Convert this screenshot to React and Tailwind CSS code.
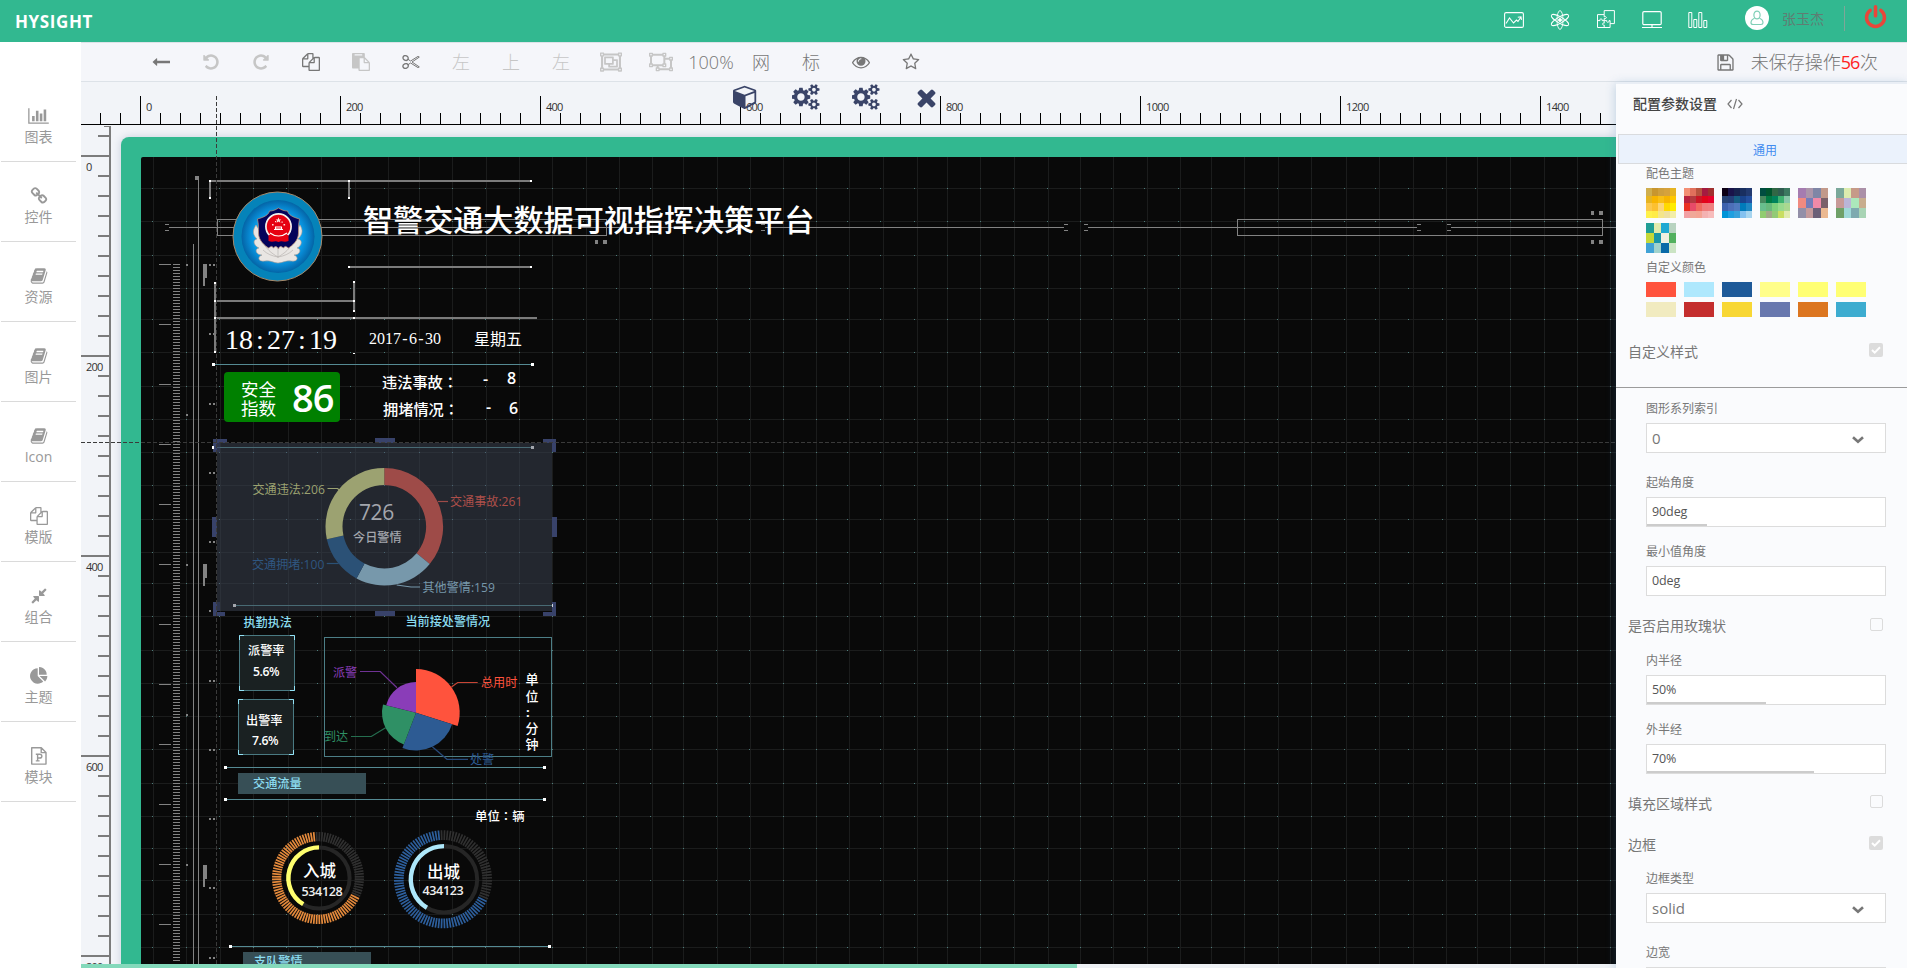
import React from "react";
import { FaRegObjectGroup, FaRegObjectUngroup } from "react-icons/fa";

/* ---------- icons ---------- */

const GLYPHS = {
  times:
    "M1490 1322q0 40-28 68l-136 136q-28 28-68 28t-68-28l-294-294-294 294q-28 28-68 28t-68-28l-136-136q-28-28-28-68t28-68l294-294-294-294q-28-28-28-68t28-68l136-136q28-28 68-28t68 28l294 294 294-294q28-28 68-28t68 28l136 136q28 28 28 68t-28 68l-294 294 294 294q28 28 28 68z",
  eye: "M1664 960q-152-236-381-353 61 104 61 225 0 185-131.5 316.5t-316.5 131.5-316.5-131.5-131.5-316.5q0-121 61-225-229 117-381 353 133 205 333.5 326.5t434.5 121.5 434.5-121.5 333.5-326.5zm-720-384q0-20-14-34t-34-14q-125 0-214.5 89.5t-89.5 214.5q0 20 14 34t34 14 34-14 14-34q0-86 61-147t147-61q20 0 34-14t14-34zm848 384q0 34-20 69-140 230-376.5 368.5t-499.5 138.5-499.5-139-376.5-368q-20-35-20-69t20-69q140-229 376.5-368t499.5-139 499.5 139 376.5 368q20 35 20 69z",
  copy: "M1696 384q40 0 68 28t28 68v1216q0 40-28 68t-68 28h-960q-40 0-68-28t-28-68v-288h-544q-40 0-68-28t-28-68v-672q0-40 20-88t48-76l408-408q28-28 76-48t88-20h416q40 0 68 28t28 68v328q68-40 128-40h416zm-544 213l-299 299h299v-299zm-640-384l-299 299h299v-299zm196 647l316-316v-416h-384v416q0 40-28 68t-68 28h-416v640h512v-256q0-40 20-88t48-76zm956 804v-1152h-384v416q0 40-28 68t-68 28h-416v640h896z",
  paste:
    "M768 1664h896v-640h-416q-40 0-68-28t-28-68v-416h-384v1152zm256-1440v-64q0-13-9.5-22.5t-22.5-9.5h-704q-13 0-22.5 9.5t-9.5 22.5v64q0 13 9.5 22.5t22.5 9.5h704q13 0 22.5-9.5t9.5-22.5zm256 672h299l-299-299v299zm512 128v672q0 40-28 68t-68 28h-960q-40 0-68-28t-28-68v-160h-544q-40 0-68-28t-28-68v-1344q0-40 28-68t68-28h1088q40 0 68 28t28 68v328q21 13 36 28l408 408q28 28 48 76t20 88z",
  undo: "M1664 896q0 156-61 298t-164 245-245 164-298 61q-172 0-327-72.5t-264-204.5q-7-10-6.5-22.5t8.5-20.5l137-138q10-9 25-9 16 2 23 12 73 95 179 147t225 52q104 0 198.5-40.5t163.5-109.5 109.5-163.5 40.5-198.5-40.5-198.5-109.5-163.5-163.5-109.5-198.5-40.5q-98 0-188 35.5t-160 101.5l137 138q31 30 14 69-17 40-59 40h-448q-26 0-45-19t-19-45v-448q0-42 40-59 39-17 69 14l130 129q107-101 244.5-156.5t284.5-55.5q156 0 298 61t245 164 164 245 61 298z",
  star: "M1201 1004l306-297-422-62-189-382-189 382-422 62 306 297-73 421 378-199 377 199zm527-357q0 22-26 48l-363 354 86 500q1 7 1 20 0 50-41 50-19 0-40-12l-449-236-449 236q-22 12-40 12-21 0-31.5-14.5t-10.5-35.5q0-6 2-20l86-500-364-354q-25-27-25-48 0-37 56-46l502-73 225-455q19-41 49-41t49 41l225 455 502 73q56 9 56 46z",
  bars: "M640 896v512h-256v-512h256zm384-512v1024h-256v-1024h256zm1024 1152v128h-2048v-1536h128v1408h1920zm-640-896v768h-256v-768h256zm384-384v1152h-256v-1152h256z",
  compress:
    "M896 960v448q0 26-19 45t-45 19-45-19l-144-144-332 332q-10 10-23 10t-23-10l-114-114q-10-10-10-23t10-23l332-332-144-144q-19-19-19-45t19-45 45-19h448q26 0 45 19t19 45zm755-672q0 13-10 23l-332 332 144 144q19 19 19 45t-19 45-45 19h-448q-26 0-45-19t-19-45v-448q0-26 19-45t45-19 45 19l144 144 332-332q10-10 23-10t23 10l114 114q10 10 10 23z",
  pie: "M768 890l546 546q-106 108-247.5 168t-298.5 60q-209 0-385.5-103t-279.5-279.5-103-385.5 103-385.5 279.5-279.5 385.5-103v762zm187 6h773q0 157-60 298.5t-168 247.5zm709-128h-768v-768q209 0 385.5 103t279.5 279.5 103 385.5z",
  link: "M1520 1216q0-40-28-68l-208-208q-28-28-68-28-42 0-72 32 3 3 19 18.5t21.5 21.5 15 19 13 25.5 3.5 27.5q0 40-28 68t-68 28q-15 0-27.5-3.5t-25.5-13-19-15-21.5-21.5-18.5-19q-33 31-33 73 0 40 28 68l206 207q27 27 68 27 40 0 68-26l147-146q28-28 28-67zm-703-705q0-40-28-68l-206-207q-28-28-68-28-39 0-68 27l-147 146q-28 28-28 67 0 40 28 68l208 208q27 27 68 27 42 0 72-31-3-3-19-18.5t-21.5-21.5-15-19-13-25.5-3.5-27.5q0-40 28-68t68-28q15 0 27.5 3.5t25.5 13 19 15 21.5 21.5 18.5 19q33-31 33-73zm895 705q0 120-85 203l-147 146q-83 83-203 83-121 0-204-85l-206-207q-83-83-83-203 0-123 88-209l-88-88q-86 88-208 88-120 0-204-84l-208-208q-84-84-84-204t85-203l147-146q83-83 203-83 121 0 204 85l206 207q83 83 83 203 0 123-88 209l88 88q86-88 208-88 120 0 204 84l208 208q84 84 84 204z",
  book: "M1703 478q40 57 18 129l-275 906q-19 64-76.5 107.5t-122.5 43.5h-923q-77 0-148.5-53.5t-99.5-131.5q-24-67-2-127 0-4 3-27t4-37q1-8-3-21.5t-3-19.5q2-11 8-21t16.5-23.5 16.5-23.5q23-38 45-91.5t30-91.5q3-10 .5-30t-.5-28q3-11 17-28t17-23q21-36 42-92t25-90q1-9-2.5-32t.5-28q4-13 22-30.5t22-22.5q19-26 42.5-84.5t27.5-96.5q1-8-3-25.5t-2-26.5q2-8 9-18t18-23 17-21q8-12 16.5-30.5t15-35 16-36 19.5-32 26.5-23.5 36-11.5 47.5 5.5l-1 3q38-9 51-9h761q74 0 114 56t18 130l-274 906q-36 119-71.5 153.5t-128.5 34.5h-869q-27 0-38 15-11 16-1 43 24 70 144 70h923q29 0 56-15.5t35-41.5l300-987q7-22 5-57 38 15 59 43zm-1064 2q-4 13 2 22.5t20 9.5h608q13 0 25.5-9.5t16.5-22.5l21-64q4-13-2-22.5t-20-9.5h-608q-13 0-25.5 9.5t-16.5 22.5zm-83 256q-4 13 2 22.5t20 9.5h608q13 0 25.5-9.5t16.5-22.5l21-64q4-13-2-22.5t-20-9.5h-608q-13 0-25.5 9.5t-16.5 22.5z",
  arrow:
    "M1792 800v192q0 14-9 23t-23 9h-1248v224q0 21-19 29t-35-5l-384-350q-10-10-10-23 0-14 10-24l384-354q16-14 35-6 19 9 19 29v224h1248q14 0 23 9t9 23z",
  cube: "M896 1629l640-349v-636l-640 233v752zm-64-865l698-254-698-254-698 254zm832-252v768q0 35-18 65t-49 47l-704 384q-28 16-61 16t-61-16l-704-384q-31-17-49-47t-18-65v-768q0-40 23-73t61-47l704-256q22-8 44-8t44 8l704 256q38 14 61 47t23 73z",
  save: "M512 1536h768v-384h-768v384zm896 0h128v-896q0-14-10-38.5t-20-34.5l-281-281q-10-10-34-20t-39-10v416q0 40-28 68t-68 28h-576q-40 0-68-28t-28-68v-416h-128v1280h128v-416q0-40 28-68t68-28h832q40 0 68 28t28 68v416zm-384-928v-320q0-13-9.5-22.5t-22.5-9.5h-192q-13 0-22.5 9.5t-9.5 22.5v320q0 13 9.5 22.5t22.5 9.5h192q13 0 22.5-9.5t9.5-22.5zm640 32v928q0 40-28 68t-68 28h-1344q-40 0-68-28t-28-68v-1344q0-40 28-68t68-28h928q40 0 88 20t76 48l280 280q28 28 48 76t20 88z",
  cogs: "M832 896q0-106-75-181t-181-75-181 75-75 181 75 181 181 75 181-75 75-181zm768 512q0-52-38-90t-90-38-90 38-38 90q0 53 37.5 90.5t90.5 37.5 90.5-37.5 37.5-90.5zm0-1024q0-52-38-90t-90-38-90 38-38 90q0 53 37.5 90.5t90.5 37.5 90.5-37.5 37.5-90.5zm-384 421v185q0 10-7 19.5t-16 10.5l-155 24q-11 35-32 76 34 48 90 115 7 11 7 20 0 12-7 19-23 30-82.5 89.5t-78.5 59.5q-11 0-21-7l-115-90q-37 19-77 31-11 108-23 155-7 24-30 24h-186q-11 0-20-7.5t-10-17.5l-23-153q-34-10-75-31l-118 89q-7 7-20 7-11 0-21-8-144-133-144-160 0-9 7-19 10-14 41-53t47-61q-23-44-35-82l-152-24q-10-1-17-9.5t-7-19.5v-185q0-10 7-19.5t16-10.5l155-24q11-35 32-76-34-48-90-115-7-11-7-20 0-12 7-20 22-30 82-89t79-59q11 0 21 7l115 90q34-18 77-32 11-108 23-154 7-24 30-24h186q11 0 20 7.5t10 17.5l23 153q34 10 75 31l118-89q8-7 20-7 11 0 21 8 144 133 144 160 0 8-7 19-12 16-42 54t-45 60q23 48 34 82l152 23q10 2 17 10.5t7 19.5zm640 533v140q0 16-149 31-12 27-30 52 51 113 51 138 0 4-4 7-122 71-124 71-8 0-46-47t-52-68q-20 2-30 2t-30-2q-14 21-52 68t-46 47q-2 0-124-71-4-3-4-7 0-25 51-138-18-25-30-52-149-15-149-31v-140q0-16 149-31 13-29 30-52-51-113-51-138 0-4 4-7 4-2 35-20t59-34 30-16q8 0 46 46.5t52 67.5q20-2 30-2t30 2q51-71 92-112l6-2q4 0 124 70 4 3 4 7 0 25-51 138 17 23 30 52 149 15 149 31zm0-1024v140q0 16-149 31-12 27-30 52 51 113 51 138 0 4-4 7-122 71-124 71-8 0-46-47t-52-68q-20 2-30 2t-30-2q-14 21-52 68t-46 47q-2 0-124-71-4-3-4-7 0-25 51-138-18-25-30-52-149-15-149-31v-140q0-16 149-31 13-29 30-52-51-113-51-138 0-4 4-7 4-2 35-20t59-34 30-16q8 0 46 46.5t52 67.5q20-2 30-2t30 2q51-71 92-112l6-2q4 0 124 70 4 3 4 7 0 25-51 138 17 23 30 52 149 15 149 31z",
  power:
    "M1664 896q0 156-61 298t-164 245-245 164-298 61-298-61-245-164-164-245-61-298q0-182 80.5-343t226.5-270q43-32 95.5-25t83.5 50q32 42 24.5 94.5t-49.5 84.5q-98 74-151.5 181t-53.5 228q0 104 40.5 198.5t109.5 163.5 163.5 109.5 198.5 40.5 198.5-40.5 163.5-109.5 109.5-163.5 40.5-198.5q0-121-53.5-228t-151.5-181q-42-32-49.5-84.5t24.5-94.5q31-43 84-50t95 25q146 109 226.5 270t80.5 343zm-640-768v640q0 52-38 90t-90 38-90-38-38-90v-640q0-52 38-90t90-38 90 38 38 90z",
};

const VIEW = { bars: "0 0 2048 1792", cogs: "0 0 1920 1792" };

function Glyph({ name, className = "size-[18px]" }) {
  return (
    <svg viewBox={VIEW[name] || "0 0 1792 1792"} className={className} fill="currentColor">
      <path d={GLYPHS[name]} />
    </svg>
  );
}

const Scissors = () => (
  <svg viewBox="0 0 18 18" className="size-[18px]" fill="none" stroke="currentColor" strokeWidth="1.3">
    <ellipse cx="3.6" cy="5" rx="2.7" ry="2.3" transform="rotate(25 3.6 5)" />
    <ellipse cx="3.6" cy="13" rx="2.7" ry="2.3" transform="rotate(-25 3.6 13)" />
    <path d="M6 6.3 8.6 8l7.4-4.6 1.3.7L10 9l7.3 4.9-1.3.7L8.6 10 6 11.7" strokeWidth="1" />
  </svg>
);

const PptFile = () => (
  <svg viewBox="0 0 18 18" className="size-[18px]" fill="none" stroke="currentColor" strokeWidth="1.4">
    <path d="M1.7.8h9.6L16 5.5v11.6H1.7z M11.2.9v4.7H16" strokeLinejoin="round" />
    <path d="M5.8 13.9h3.8M5.8 7.2h1.8M7.6 7.2v6.5M7.4 7.3h2.2c3 0 3 3.7 0 3.7H7.8" strokeWidth="1.4" />
  </svg>
);

/* ---------- header ---------- */

const headerIcon = "h-[20px] w-[20px]";
const HEADER_ICONS = [
  <svg viewBox="0 0 20 20" className={headerIcon} fill="none" stroke="currentColor" strokeWidth="1.1">
    <rect x=".6" y="2.6" width="18.8" height="14.8" rx="1.5" />
    <path d="M2 13.5 5.5 8l4 5 3-3 1.5 1.5 3-4.5M13.8 7.2l3.2-.4.5 3" />
  </svg>,
  <svg viewBox="0 0 20 20" className={headerIcon} fill="none" stroke="currentColor" strokeWidth=".9">
    <ellipse cx="10" cy="10" rx="3" ry="9.4" />
    <ellipse cx="10" cy="10" rx="3" ry="9.8" transform="rotate(60 10 10)" />
    <ellipse cx="10" cy="10" rx="3" ry="9.8" transform="rotate(120 10 10)" />
    <circle cx="10" cy="10" r="1.5" fill="currentColor" />
  </svg>,
  <svg viewBox="0 0 20 20" className={headerIcon} fill="none" stroke="currentColor" strokeWidth="1">
    <path d="M8.2 4.6V.6h10.2v13h-4.3M8.2 4.6H1.5v12.9h12.6v-3.9M8.2 4.6v2.2c2.5-1.2 3.2 2.4 0 1.8V10M1.5 10.6H4c-1-2.2 3-2.2 2.2 0h4.6c-1 2.2 3 2.2 2.2 0h1.100M8.2 11v2.2c-2-.8-2.6 2.2 0 1.8v2.5M14.1 13.6v-3" />
  </svg>,
  <svg viewBox="0 0 20 20" className={headerIcon} fill="none" stroke="currentColor" strokeWidth="1.2">
    <rect x=".8" y="1.6" width="18.4" height="13" rx="1.2" />
    <path d="M10 14.6v2.6M0 17.5h20" />
  </svg>,
  <svg viewBox="0 0 20 20" className={headerIcon} fill="none" stroke="currentColor" strokeWidth="1">
    <path d="M.8 2.500h3v15h-3zM5.800 9.500h3v8h-3zM10.800 2.500h3v15h-3zM15.800 10.500h3v7h-3z" />
  </svg>,
];

function Header() {
  return (
    <header className="flex h-[42px] shrink-0 items-start bg-[#32b890] text-white">
      <div className="mt-[13px] ml-[15px] font-['Open_Sans'] text-[17px] leading-[18px] font-bold tracking-[0.6px]">HYSIGHT</div>
      <nav className="mt-[10px] ml-auto flex">
        {HEADER_ICONS.map((icon, i) => (
          <span key={i} className="flex w-[46px] justify-center">
            {icon}
          </span>
        ))}
      </nav>
      <span className="mt-[6px] ml-[24px] flex size-[24px] items-center justify-center rounded-full bg-white text-[#7fcfb6]">
        <svg viewBox="0 0 14 16" className="h-[16px] w-[14px]" fill="none" stroke="currentColor" strokeWidth="1.2">
          <ellipse cx="7" cy="5" rx="3.1" ry="3.9" />
          <path d="M4.500 8.300C2 9.300 1 10.700 1 12.800 1 14.100 1.800 14.500 3 14.500H11C12.200 14.500 13 14.100 13 12.800 13 10.700 12 9.300 9.500 8.300" />
        </svg>
      </span>
      <span className="mt-[10px] ml-[13px] text-[14px] leading-[18px] text-[#5f7d73]">张玉杰</span>
      <span className="mt-[6px] ml-[20px] h-[25px] w-px bg-[#7fa698]" />
      <Glyph name="power" className="mt-[5px] mr-[19px] ml-[18px] size-[25px] text-[#e8463a]" />
    </header>
  );
}

/* ---------- left menu ---------- */

const MENU = [
  ["图表", <Glyph name="bars" className="h-[18px] w-[21px]" />],
  ["控件", <Glyph name="link" />],
  ["资源", <Glyph name="book" />],
  ["图片", <Glyph name="book" />],
  ["Icon", <Glyph name="book" />],
  ["模版", <Glyph name="copy" />],
  ["组合", <Glyph name="compress" />],
  ["主题", <Glyph name="pie" />],
  ["模块", <PptFile />],
];

function Sidebar() {
  return (
    <aside className="w-[81px] shrink-0 bg-white pt-[40px] pl-px text-[#999]">
      {MENU.map(([label, icon]) => (
        <div key={label} className="flex h-[80px] w-[75px] flex-col items-center border-b border-[#dadada] pt-[25px]">
          {icon}
          <span className="mt-[3px] text-[14px] leading-[18px]">{label}</span>
        </div>
      ))}
    </aside>
  );
}

/* ---------- toolbar ---------- */

const TOOLS = [
  [<Glyph name="arrow" />, true],
  [<Glyph name="undo" />, false],
  [<Glyph name="undo" className="size-[18px] -scale-x-100" />, false],
  [<Glyph name="copy" />, true],
  [<Glyph name="paste" />, false],
  [<Scissors />, true],
  ["左", false],
  ["上", false],
  ["左", false],
  [<FaRegObjectGroup className="size-[22px]" />, false],
  [<FaRegObjectUngroup className="size-[24px]" />, false],
  ["100%", true],
  ["网", true],
  ["标", true],
  [<Glyph name="eye" />, true],
  [<Glyph name="star" />, true],
];

function Toolbar() {
  return (
    <div className="flex h-[40px] shrink-0 items-center border-y border-[#dde2e8] bg-[#f5f6fa] pl-[55px] text-[18px] leading-none font-light">
      {TOOLS.map(([item, on], i) => (
        <span key={i} className={`flex w-[50px] items-center justify-center ${on ? "text-[#777]" : "text-[#c6c6c6]"}`}>
          {item}
        </span>
      ))}
      <Glyph name="save" className="ml-auto size-[19px] text-[#777]" />
      <span className="mr-[29px] ml-[16px] text-[#777]">
        未保存操作<span className="mr-[1px] font-['Open_Sans'] font-normal tracking-[-1.2px] text-[#f22]">56</span>次
      </span>
    </div>
  );
}

/* ---------- rulers ---------- */

const range = (a, b, step) => Array.from({ length: Math.floor((b - a) / step) + 1 }, (_, i) => a + i * step);

function TopRuler() {
  return (
    <svg viewBox="81 82 1535 43" className="block h-[43px] w-[1535px] shrink-0" shapeRendering="crispEdges">
      <rect x="81" y="124" width="1535" height="1" fill="#000" />
      {range(100, 1616, 20).map((x) => {
        const major = (x - 140) % 200 === 0;
        return <rect key={x} x={x} y={major ? 96 : 113} width="1" height={major ? 28 : 11} fill="#000" />;
      })}
      {range(0, 1400, 200).map((v) => (
        <text key={v} x={v + 146} y="111" fontSize="11" textLength={String(v).length * 5.8} fill="#333">
          {v}
        </text>
      ))}
    </svg>
  );
}

function SideRuler() {
  return (
    <svg viewBox="81 125 31 843" className="block h-[843px] w-[31px] shrink-0" shapeRendering="crispEdges">
      <rect x="109" y="126" width="2" height="842" fill="#7c7c7c" />
      <rect x="104" y="126" width="6" height="1" fill="#7c7c7c" />
      {range(136, 966, 20).map((y) => {
        const major = (y - 156) % 200 === 0;
        return <rect key={y} x={major ? 81 : 98} y={y - 1} width={major ? 29 : 12} height="2" fill="#7c7c7c" />;
      })}
      {range(0, 800, 200).map((v) => (
        <text key={v} x="86" y={v + 171} fontSize="11" textLength={String(v).length * 5.8} fill="#333">
          {v}
        </text>
      ))}
    </svg>
  );
}

/* ---------- canvas drawing ---------- */

const GRID_X = [153, 186, 220, 253, 288, 321, 355, 388, 419, 452, 486, 519, 552, 586, 619, 652, 683, 717, 750, 783, 816, 849, 883, 917, 947, 980, 1014, 1048, 1080, 1113, 1147, 1180, 1211, 1244, 1278, 1311, 1346, 1379, 1413, 1446, 1477, 1510, 1544, 1577, 1610];
const DOT_X = [152, 186, 219, 253, 286, 317, 350, 384, 419, 452, 485, 519, 552, 583, 616, 650, 683, 716, 749, 783, 816, 847, 880, 914, 947, 980, 1013, 1047, 1080, 1111, 1144, 1178, 1211, 1244, 1277, 1311, 1344, 1375, 1408, 1442, 1475, 1510, 1544, 1577, 1610];
const GRID_Y = [188, 221, 255, 288, 319, 352, 386, 419, 452, 485, 519, 552, 583, 616, 650, 683, 716, 749, 783, 816, 848, 880, 914, 947];

function GridLines() {
  return (
    <g shapeRendering="crispEdges">
      {GRID_X.map((x) => (
        <rect key={x} x={x} y="157" width="1" height="807" fill="#1b1c1c" />
      ))}
      {GRID_Y.map((y) => (
        <rect key={y} x="141" y={y} width="1475" height="1" fill="#1b1c1c" />
      ))}
      {GRID_Y.flatMap((y) => DOT_X.map((x) => <rect key={`${x}-${y}`} x={x} y={y} width="1" height="1" fill="#4f7d7b" />))}
    </g>
  );
}

const R = (x, y, w, h, fill) => <rect key={`${x},${y},${w},${h}`} x={x} y={y} width={w} height={h} fill={fill} />;

function Decor() {
  const g = "#828282";
  return (
    <g shapeRendering="crispEdges">
      {R(198, 178, 1, 786, g)}
      {R(195, 176, 4, 4, g)}
      {R(193, 244, 1, 720, g)}
      {range(264, 962, 3).map((y) => R(173, y, 7, 1, g))}
      {range(264, 962, 60).map((y) => R(159, y, 12, 1, g))}
      {range(264, 962, 150).map((y) => R(186, y, 2, 2, g))}
      {[264, 564, 865].flatMap((y) => [R(203, y, 4, 14, g), R(203, y, 2, 22, g)])}
      {range(0, 10, 1).flatMap((i) => {
        const y = Math.round(264 + i * 69.25);
        return [R(209, y, 2, 2, g), R(213, y, 2, 2, g)];
      })}
      {[
        [169, 736],
        [765, 1064],
        [1088, 1417],
        [1451, 1616],
      ].map(([a, b]) => R(a, 227, b - a, 1, g))}
      {[165, 736, 761, 1064, 1084, 1417, 1447].flatMap((x) => [R(x, 224, 4, 1, g), R(x, 230, 4, 1, g)])}
      <rect x="217.5" y="219.5" width="389" height="16" fill="none" stroke={g} />
      <rect x="1237.5" y="219.5" width="365" height="16" fill="none" stroke={g} />
      {[
        [595, 240],
        [1591, 240],
        [1591, 211],
      ].flatMap(([x, y]) => [R(x, y, 3, 4, g), R(x + 8, y, 4, 4, g)])}
    </g>
  );
}

function FrameLines() {
  const g = "#7b7b7b";
  const dots = [
    [209, 180],
    [348, 180],
    [530, 180],
    [209, 197],
    [348, 197],
    [348, 266],
    [530, 266],
    [214, 282],
    [353, 281],
    [214, 300],
    [353, 300],
    [353, 310],
    [214, 317],
    [353, 317],
    [214, 351],
    [353, 353],
  ];
  return (
    <g shapeRendering="crispEdges">
      {R(209, 180, 322, 2, g)}
      {R(209, 181, 2, 17, g)}
      {R(348, 181, 2, 17, g)}
      {R(348, 266, 183, 2, g)}
      {R(214, 283, 2, 69, g)}
      {R(353, 281, 2, 30, g)}
      {R(215, 300, 139, 2, g)}
      {R(215, 317, 322, 2, g)}
      {dots.map(([x, y]) => R(x, y, 2, y === 353 ? 1 : 2, "#fff"))}
    </g>
  );
}

function TealLine({ x1, x2, y }) {
  return (
    <g shapeRendering="crispEdges">
      <rect x={x1} y={y} width={x2 - x1} height="1" fill="#558a93" />
      <rect x={x1 - 1} y={y - 1} width="3" height="3" fill="#fff" />
      <rect x={x2 - 2} y={y - 1} width="3" height="3" fill="#fff" />
    </g>
  );
}

function Emblem() {
  return (
    <g>
      <defs>
        <radialGradient id="core">
          <stop offset="0" stopColor="#35c4ff" />
          <stop offset=".65" stopColor="#0aa0ee" />
          <stop offset="1" stopColor="#0464a6" />
        </radialGradient>
      </defs>
      <circle cx="277.5" cy="236.5" r="44.5" fill="#0583b9" stroke="#a58a6c" strokeWidth="1" />
      <circle cx="278" cy="236.5" r="36.5" fill="url(#core)" />
      <path
        d="M256 225c-4 6-3 10 1 14-5 1-3 7 2 9-5 1-3 7 3 7-5 2-4 7 3 6 5-1 9 2 13 2s9-3 13-2c7 1 8-4 3-6 6 0 8-6 3-7 5-2 6-8 1-9 5-5 5-9 2-14l-5 8c-10 14-24 14-34 0z"
        fill="#e9e6e3"
        stroke="#b79c8f"
        strokeWidth=".6"
      />
      <path d="M262 240c4 9 9 13 16 17M294 240c-4 9-9 13-16 17M278 248v10M263 250c4 4 9 6 15 7M293 250c-4 4-9 6-15 7" stroke="#b9b4b2" strokeWidth=".7" fill="none" />
      <path
        d="M278.5 208c3 2 6 3 9 3 1 4 5 6 12 8-1 5-1 9-1 14 0 8-7 13-10 15-2-1-3-3-5 0-3-2-4-2-5 1-2-3-3-3-5-1-2-3-3-1-5 0-3-2-10-7-10-15 0-5 0-9-1-14 7-2 11-4 12-8 3 0 6-1 9-3z"
        fill="#03025a"
        stroke="#b98f78"
        strokeWidth=".8"
      />
      <circle cx="278.5" cy="226.5" r="12.6" fill="#e60012" stroke="#f3efec" strokeWidth="1.7" />
      <path d="M268.500 235c4-1 16-1 20 0v6c-5 2-6-1-10 1-4-2-5 1-10-1z" fill="#e60012" />
      <path d="M270 233c5 4 12 4 17 0M274 229.5h9M275.5 227h6v2h-6z" stroke="#fff" strokeWidth="1.1" fill="none" />
      <path d="m278.5 217.500.9 1.900h2l-1.600 1.300.6 2-1.900-1.200-1.900 1.200.6-2-1.600-1.300h2zM272 224h1.600v1.600H272zM275 221h1.200v1.200H275zM283.500 224h1.600v1.600h-1.600zM281.500 221.500h1.200v1.200h-1.200z" fill="#ffdede" />
    </g>
  );
}

const polar = (cx, cy, r, deg) => {
  const a = ((deg - 90) * Math.PI) / 180;
  return [cx + r * Math.cos(a), cy + r * Math.sin(a)].map((n) => n.toFixed(2)).join(" ");
};
const sector = (cx, cy, r0, r1, a, b) => {
  const big = b - a > 180 ? 1 : 0;
  return r0 === 0
    ? `M${cx} ${cy}L${polar(cx, cy, r1, a)}A${r1} ${r1} 0 ${big} 1 ${polar(cx, cy, r1, b)}Z`
    : `M${polar(cx, cy, r1, a)}A${r1} ${r1} 0 ${big} 1 ${polar(cx, cy, r1, b)}L${polar(cx, cy, r0, b)}A${r0} ${r0} 0 ${big} 0 ${polar(cx, cy, r0, a)}Z`;
};
const arc = (cx, cy, r, a, b) => `M${polar(cx, cy, r, a)}A${r} ${r} 0 ${b - a > 180 ? 1 : 0} 1 ${polar(cx, cy, r, b)}`;

function Donut() {
  const parts = [
    [0, 129.4, "#9e4b48"],
    [129.4, 208.2, "#7798ab"],
    [208.2, 257.8, "#2b5176"],
    [257.8, 360, "#9ca271"],
  ];
  return (
    <g>
      {parts.map(([a, b, c]) => (
        <path key={c} d={sector(384.3, 526.7, 41.8, 58.8, a, b)} fill={c} />
      ))}
      <g fill="none" strokeWidth="1.2">
        <path d="M438 501.5h10" stroke="#9e4b48" />
        <path d="M327.5 488.5h10l2 1.5" stroke="#9ca271" />
        <path d="M326.7 563.5h12" stroke="#2b5176" />
        <path d="M396.7 585l14.3 2h9" stroke="#7798ab" />
      </g>
    </g>
  );
}

function Rose() {
  const parts = [
    [0, 107.7, 43.7, "#ff533d"],
    [107.7, 201, 37.9, "#2d5b93"],
    [201, 284, 34, "#2f9065"],
    [284, 360, 30.7, "#8a3db8"],
  ];
  return (
    <g>
      {parts.map(([a, b, r, c]) => (
        <path key={c} d={sector(416, 712.7, 0, r, a, b)} fill={c} />
      ))}
      <g fill="none" strokeWidth="1.2">
        <path d="M451.5 687l6.2-4.5h20" stroke="#c84434" />
        <path d="M360 671.5h20.3L397 687.7" stroke="#6f3294" />
        <path d="M351 736.5h20.3L386 727.5" stroke="#256e4f" />
        <path d="M432.3 746.7l14.7 12.600h21" stroke="#27497a" />
      </g>
    </g>
  );
}

function Gauge({ cx, cy, outer, inner, width, color, inkColor }) {
  const count = 100;
  return (
    <g>
      {Array.from({ length: count }, (_, i) => {
        const mid = (i + 0.5) * (360 / count);
        return (
          <path
            key={i}
            d={`M${polar(cx, cy, outer, mid)}L${polar(cx, cy, outer - width, mid)}`}
            stroke={mid > 114 && mid < 358 ? color : "#303030"}
            strokeWidth="1.7"
          />
        );
      })}
      <circle cx={cx + 1} cy={cy} r={inner} fill="none" stroke="#262626" strokeWidth="4" />
      <path d={arc(cx + 1, cy, inner, 211, 360)} fill="none" stroke={inkColor} strokeWidth="4.4" />
    </g>
  );
}

function CornerBox({ x, y }) {
  return (
    <g>
      <rect x={x + 0.5} y={y + 0.5} width="55" height="55" fill="#1a2122" stroke="#4a7a82" />
      <path
        d={`M${x + 0.5} ${y + 5}v-4.5h4.5M${x + 51} ${y + 0.5}h4.5v4.5M${x + 55.5} ${y + 51}v4.5h-4.5M${x + 5} ${y + 55.5}h-4.5v-4.5`}
        fill="none"
        stroke="#93e2f6"
      />
    </g>
  );
}

function Selection() {
  const c = "#38426a";
  return (
    <g shapeRendering="crispEdges">
      <path fill={c} d="M213 439h14v4h-10v9h-4zM543 439h13v13h-4v-9h-9zM213 602h4v10h8v4h-12zM552 602h4v14h-13v-4h9z" />
      {R(375, 438, 20, 5, c)}
      {R(375, 611, 20, 5, c)}
      {R(212, 517, 5, 20, c)}
      {R(552, 517, 5, 20, c)}
      {R(217, 443, 335, 168, "#23272f")}
      {GRID_X.filter((x) => x > 217 && x < 552).map((x) => R(x, 443, 1, 168, "#2b3038"))}
      {GRID_Y.filter((y) => y > 443 && y < 611).map((y) => R(217, y, 335, 1, "#2b3038"))}
      {GRID_Y.filter((y) => y > 443 && y < 611).flatMap((y) => DOT_X.filter((x) => x > 217 && x < 552).map((x) => R(x, y, 1, 1, "#4b6573")))}
      {R(217, 447, 315, 1, "#486a74")}
      {R(212, 446, 2, 3, "#fff")}
      {R(531, 446, 3, 3, "#a3a6ad")}
      {R(234, 605, 318, 1, "#486a74")}
      {R(233, 604, 3, 3, "#a3a6ad")}
      {R(552, 604, 1, 3, "#d0d3d8")}
      <path fill={c} d="M217 443h3v9h-3zM217 602h3v9h-3z" opacity=".5" />
    </g>
  );
}

/* Items placed on the free canvas: text, left x, centre y, classes. */
const LABELS = [
  ["智警交通大数据可视指挥决策平台", 363, 220, "text-[30.1px] font-medium text-white"],
  ["星期五", 474, 338.5, "text-[16px] text-white"],
  ["安全", 241, 389.5, "text-[17.5px] text-white"],
  ["指数", 241, 408.5, "text-[17.5px] text-white"],
  ["86", 292, 396.5, "text-[38px] tracking-[-1px] font-semibold text-white"],
  ["违法事故：", 382, 382, "text-[15.2px] font-medium text-white"],
  ["拥堵情况：", 383, 408.5, "text-[15.2px] font-medium text-white"],
  ["-", 483, 379, "text-[16px] font-semibold text-white"],
  ["8", 507, 378, "text-[16px] font-semibold text-white"],
  ["-", 486, 407, "text-[16px] font-semibold text-white"],
  ["6", 509, 407.5, "text-[16px] font-semibold text-white"],
  ["交通违法:206", 252.5, 490, "text-[12.1px] text-[#9ca271]"],
  ["交通事故:261", 450, 502, "text-[12.1px] text-[#ad4f4a]"],
  ["交通拥堵:100", 252, 565, "text-[12.1px] text-[#2f5680]"],
  ["其他警情:159", 422.5, 588, "text-[12.1px] text-[#7798ab]"],
  ["726", 359, 512, "text-[21px] tracking-[-0.4px] font-medium text-[#a3a6ad]"],
  ["今日警情", 353, 538, "text-[12.2px] font-medium text-[#a3a6ad]"],
  ["执勤执法", 243.5, 623, "text-[12.1px] font-medium text-[#8bdcf0]"],
  ["当前接处警情况", 405.5, 622, "text-[12.1px] font-medium text-[#8bdcf0]"],
  ["派警率", 248, 651, "text-[12.2px] font-medium text-white"],
  ["5.6%", 253, 672, "text-[12.2px] font-semibold tracking-[-0.4px] text-white"],
  ["出警率", 246, 720.5, "text-[12.2px] font-medium text-white"],
  ["7.6%", 252, 740.5, "text-[12.2px] font-semibold tracking-[-0.4px] text-white"],
  ["总用时", 481, 683, "text-[12.1px] text-[#ff533d]"],
  ["派警", 333, 673, "text-[12.1px] text-[#8a3db8]"],
  ["到达", 324, 737, "text-[12.1px] text-[#2f9065]"],
  ["处警", 470, 760, "text-[12.1px] text-[#2d5b93]"],
  ["单", 525.5, 679, "text-[13px] font-medium text-white"],
  ["位", 525.5, 696, "text-[13px] font-medium text-white"],
  [":", 526, 712, "text-[13px] font-bold text-white"],
  ["分", 525.5, 728, "text-[13px] font-medium text-white"],
  ["钟", 525.5, 744, "text-[13px] font-medium text-white"],
  ["交通流量", 253, 784, "text-[12.2px] font-medium text-[#8bdcf0]"],
  ["单位：辆", 475, 817, "text-[12.4px] font-medium text-white"],
  ["入城", 303, 871, "text-[16.5px] font-medium text-white"],
  ["534128", 301.5, 891.5, "text-[12.6px] font-semibold tracking-[-0.4px] text-[#eee]"],
  ["出城", 427, 871.5, "text-[16.5px] font-medium text-white"],
  ["434123", 422.5, 890.5, "text-[12.6px] font-semibold tracking-[-0.4px] text-[#eee]"],
  ["支队警情", 254, 962, "text-[12.2px] font-medium text-[#8bdcf0]"],
];

const Placed = ({ x, y, className, children }) => (
  <div className={`absolute -translate-y-1/2 leading-none whitespace-nowrap ${className}`} style={{ left: x - 141, top: y - 157 }}>
    {children}
  </div>
);

/* The full-width colon sits centred in its cell, as in the TC cut of the font. */
const withColon = (text) => {
  const [head, tail] = text.split("：");
  if (tail === undefined) return text;
  return (
    <>
      {head}
      <span lang="zh-TW" className="font-['Noto_Sans_CJK_TC']">
        ：
      </span>
      {tail}
    </>
  );
};

function Canvas() {
  return (
    <div className="relative h-[807px] w-[1475px] overflow-hidden rounded-tl-[2px] bg-[#090909]">
      <svg viewBox="141 157 1475 807" className="absolute inset-0 h-[807px] w-[1475px]">
        <GridLines />
        <Decor />
        <FrameLines />
        <Emblem />
        <TealLine x1={213} x2={533} y={364} />
        <rect x="224" y="372" width="116" height="50" rx="4" fill="#008000" />
        <Selection />
        <Donut />
        <CornerBox x={239} y={635} />
        <CornerBox x={238} y={699} />
        <rect x="324.5" y="637.5" width="227" height="119" fill="none" stroke="#4c7e86" />
        <Rose />
        <TealLine x1={225} x2={545} y={767} />
        <rect x="238" y="773" width="128" height="21" fill="#374f56" />
        <TealLine x1={225} x2={545} y={799} />
        <Gauge cx={318} cy={878} outer={46} inner={30.6} width={9.3} color="#e58a3c" inkColor="#ffff6e" />
        <Gauge cx={443} cy={879.3} outer={49} inner={33.2} width={9.7} color="#2d5f9d" inkColor="#aee8fb" />
        <TealLine x1={230} x2={550} y={946} />
        <rect x="243" y="952" width="128" height="21" fill="#374f56" />
      </svg>
      <Placed x={225} y={340} className="flex font-['Liberation_Serif'] text-[28px] text-white">
        {"18:27:19".split("").map((c, i) => (
          <span key={i} className="w-[14px] text-center">
            {c}
          </span>
        ))}
      </Placed>
      <Placed x={369} y={339} className="flex font-['Liberation_Serif'] text-[16px] text-white">
        {"2017-6-30".split("").map((c, i) => (
          <span key={i} className="w-[8px] text-center">
            {c}
          </span>
        ))}
      </Placed>
      {LABELS.map(([text, x, y, cls]) => (
        <Placed key={`${x}-${y}`} x={x} y={y} className={cls}>
          {withColon(text)}
        </Placed>
      ))}
    </div>
  );
}

function Workspace() {
  return (
    <div className="relative flex w-[1535px] shrink-0 flex-col overflow-hidden bg-[#f2f4f8]">
      <TopRuler />
      <div className="flex">
        <SideRuler />
        <div className="mt-[12px] ml-[9px] rounded-tl-[8px] bg-[#32b890] pt-[20px] pl-[20px] shadow-[0_0_8px_rgba(40,60,110,0.2)]">
          <Canvas />
        </div>
      </div>
      <div className="absolute bottom-0 left-0 h-[4px] w-full bg-[#eef1f5]">
        <div className="h-full w-[996px] bg-[#84d9bb]" />
      </div>
      <svg viewBox="81 82 1535 886" className="absolute inset-0 h-[886px] w-[1535px]" fill="none" stroke="#3a3a3a" strokeDasharray="4 2">
        <path d="M216.5 96V964M81 442.5H1616" />
      </svg>
      <div className="absolute top-[2px] left-[634px] flex items-start text-[#3a4468]">
        <span className="w-[60px] pl-[18px]">
          <Glyph name="cube" className="size-[25px]" />
        </span>
        <span className="w-[60px] pl-[17px]">
          <Glyph name="cogs" className="h-[26px] w-[29px]" />
        </span>
        <span className="w-[60px] pl-[17px]">
          <Glyph name="cogs" className="h-[26px] w-[29px]" />
        </span>
        <Glyph name="times" className="ml-[18px] size-[27px]" />
      </div>
    </div>
  );
}

/* ---------- settings panel ---------- */

const THEMES = [
  [5, "#cfae4e #c8962f #cf9f3c #d6a23c #e6b422 #e6b422 #f8b500 #fac015 #f8b500 #ffc800 #fcc84b #fcc030 #fcd575 #ffd900 #ffec00 #fff14a #ffec47 #f4e589 #eee0a0 #f3eea8"],
  [5, "#f38f74 #e0705c #b7543f #a51a40 #a0302f #b8223f #b33a40 #cc1626 #e2041b #e8002c #ea3022 #e84a68 #f0695f #f07c7c #ee8080 #f2a0a4 #f0a898 #f4a494 #f4b2b2 #f7bcbc"],
  [5, "#0d0015 #1a144a #17234e #192f60 #223a70 #274374 #243f78 #165e83 #19448e #2450a0 #3e62ad #4d6fb8 #507abf #007bbb #2088c4 #0094d8 #1f9fe0 #38a1db #84c1f0 #a8d5ef"],
  [5, "#004d40 #00552e #316745 #2f5d50 #3b7960 #47885e #007b43 #00825c #3eb370 #88c8a8 #68be8d #68b87c #7ed07c #98d98e #aad890 #90cc70 #a2aa88 #93ca76 #c8de62 #e0ebaf"],
  [4, "#a57cb0 #ab95aa #7f86a6 #c2998a #f08a80 #767db8 #f08aa8 #7a6069 #938fa8 #c49a9c #6b6078 #ebb890"],
  [4, "#7aa89a #dcecae #c69a88 #ab90a8 #c89a98 #bab5d8 #abe8bb #c8ad8e #6fa068 #9fd9d8 #7eaab0 #a8d4b5"],
  [4, "#209e95 #e2ebac #20a9d2 #b8d3c0 #c5d838 #1996a8 #efefe0 #52b05e #40a2d6 #a0d2cc #0a6aa8 #cbe4c4"],
];

const COLORS = ["#ff533d", "#aee8fd", "#1e5a99", "#fffe8a", "#ffff74", "#ffff74", "#f1ebc0", "#c42e2e", "#f8d735", "#6878ae", "#dc7620", "#3dacd0"];

function Swatch({ cols, colors }) {
  return (
    <div className={`grid size-[30px] ${cols === 5 ? "grid-cols-5 grid-rows-4" : "grid-cols-4 grid-rows-3"}`}>
      {colors.map((c, i) => (
        <span key={i} style={{ backgroundColor: c }} />
      ))}
    </div>
  );
}

function CheckBox({ checked }) {
  return checked ? (
    <span className="flex size-[14px] items-center justify-center rounded-[2px] bg-[#dcdcdc]">
      <svg viewBox="0 0 10 10" className="size-[10px]" fill="none" stroke="#fff" strokeWidth="2">
        <path d="M1 5l2.7 2.7L9 2.3" />
      </svg>
    </span>
  ) : (
    <span className="block size-[13px] rounded-[2px] border border-[#dcdcdc]" />
  );
}

function OptionRow({ label, checked, className }) {
  return (
    <div className={`flex shrink-0 items-center justify-between pr-[24px] pl-[12px] text-[14px] text-[#777] ${className}`}>
      <span className="leading-none">{label}</span>
      <span className="mb-[4px]">
        <CheckBox checked={checked} />
      </span>
    </div>
  );
}

function Field({ label, value, select, fill = 0, className }) {
  return (
    <div className={`ml-[30px] w-[240px] shrink-0 ${className}`}>
      <div className="flex h-[28px] items-center text-[12px] leading-none text-[#777]">{label}</div>
      <div className="relative flex h-[30px] items-center justify-between border border-[#dcdcdc] bg-white pr-[21px] pl-[5px]">
        {select ? (
          <>
            <span className="font-['Open_Sans'] text-[15px] leading-none text-[#777]">{value}</span>
            <svg viewBox="0 0 12 8" className="mt-[3px] h-[8px] w-[12px]" fill="none" stroke="#777" strokeWidth="2.6">
              <path d="M1 1.2l5 4.6 5-4.6" />
            </svg>
          </>
        ) : (
          <span className="font-['Open_Sans'] text-[12.5px] leading-none tracking-[-0.1px] text-[#555]">{value}</span>
        )}
        {fill > 0 && <span className="absolute bottom-0 left-0 h-[2px] bg-[#ccc]" style={{ width: `${fill}%` }} />}
      </div>
    </div>
  );
}

function Panel() {
  return (
    <section className="mt-[2px] flex w-[291px] shrink-0 flex-col overflow-hidden bg-[#fafbfd]">
      <div className="flex h-[50px] shrink-0 items-center pb-[10px] pl-[17px]">
        <h2 className="text-[14px] leading-none font-medium text-[#444]">配置参数设置</h2>
        <svg viewBox="0 0 16 12" className="ml-[10px] h-[12px] w-[16px]" fill="none" stroke="#777" strokeWidth="1.2">
          <path d="M4.500 2 1 6l3.500 4M11.500 2 15 6l-3.500 4M9.500 1l-3 10" />
        </svg>
      </div>
      <div className="ml-[2px] flex h-[30px] shrink-0 items-center justify-center border border-r-0 border-[#d9dbde] bg-[#ebf2fc] pl-[4px] text-[12px] text-[#418cf0]">
        <span className="mt-[3px] leading-none">通用</span>
      </div>
      <div className="flex h-[20px] shrink-0 items-center pl-[30px] text-[12px] leading-none text-[#777]">配色主题</div>
      <div className="mt-[4px] ml-[30px] grid w-[220px] shrink-0 grid-cols-6 gap-x-[8px] gap-y-[5px]">
        {THEMES.map(([cols, list], i) => (
          <Swatch key={i} cols={cols} colors={list.split(" ")} />
        ))}
      </div>
      <div className="flex h-[29px] shrink-0 items-center pl-[30px] text-[12px] leading-none text-[#777]">自定义颜色</div>
      <div className="ml-[30px] grid w-[220px] shrink-0 grid-cols-6 gap-x-[8px] gap-y-[5px]">
        {COLORS.map((c, i) => (
          <span key={i} className="h-[15px]" style={{ backgroundColor: c }} />
        ))}
      </div>
      <OptionRow label="自定义样式" checked className="h-[70px]" />
      <hr className="shrink-0 border-[#9b9b9b]" />
      <Field label="图形系列索引" value="0" select className="mt-[7px]" />
      <Field label="起始角度" value="90deg" fill={25} className="mt-[16px]" />
      <Field label="最小值角度" value="0deg" className="mt-[11px]" />
      <OptionRow label="是否启用玫瑰状" className="h-[51px] pt-[9px]" />
      <Field label="内半径" value="50%" fill={50} />
      <Field label="外半经" value="70%" fill={70} className="mt-[11px]" />
      <OptionRow label="填充区域样式" className="h-[50px] pt-[9px]" />
      <OptionRow label="边框" checked className="h-[41px]" />
      <Field label="边框类型" value="solid" select />
      <Field label="边宽" value="" className="mt-[16px]" />
    </section>
  );
}

export default function App() {
  return (
    <div className="flex h-[968px] w-[1907px] flex-col overflow-hidden bg-[#f2f4f8] font-['Open_Sans','Noto_Sans_CJK_SC',sans-serif]">
      <Header />
      <div className="flex min-h-0 flex-1">
        <Sidebar />
        <main className="flex min-w-0 flex-1 flex-col">
          <Toolbar />
          <div className="flex min-h-0 flex-1">
            <Workspace />
            <div className="z-10 flex bg-[#e9eef5] shadow-[0_2px_10px_rgba(60,120,170,0.3)]">
              <Panel />
            </div>
          </div>
        </main>
      </div>
    </div>
  );
}
